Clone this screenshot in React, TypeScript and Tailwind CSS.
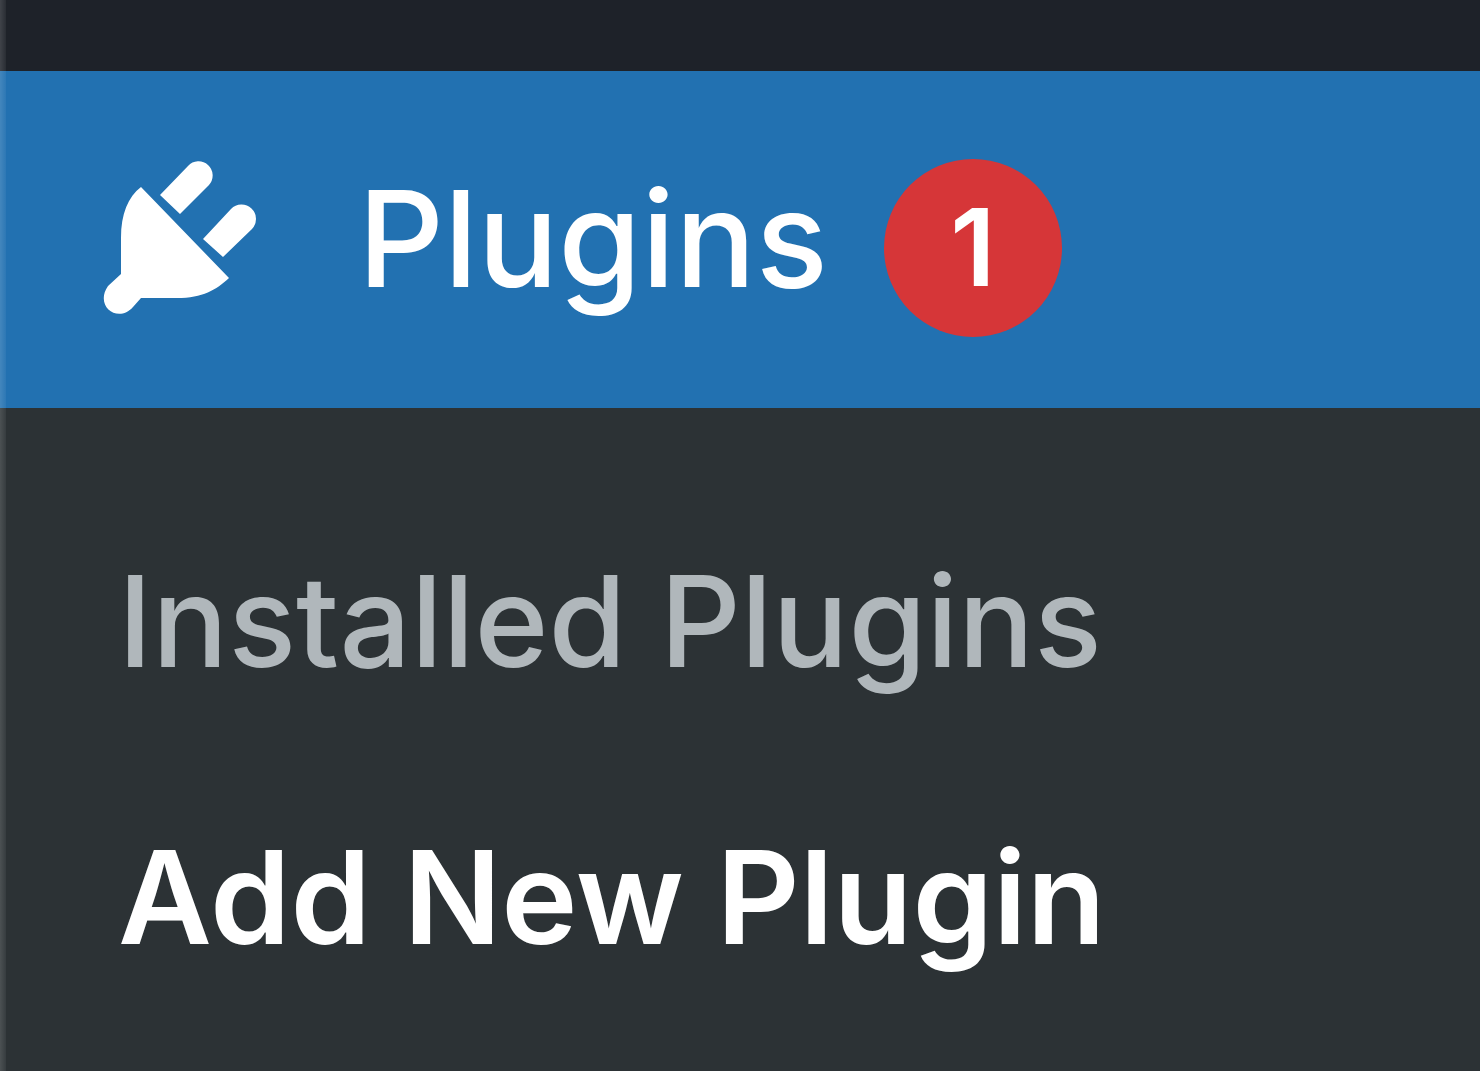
const SUBMENU_ITEMS = [
  { label: 'Installed Plugins', href: '#installed', current: false },
  { label: 'Add New Plugin', href: '#add-new', current: true },
];

const PlugIcon = () => (
  <svg
    viewBox="0 0 160 160"
    className="size-40 shrink-0"
    fill="currentColor"
    aria-hidden="true"
  >
    <path d="M60 35 88 6A14 14 0 0 1 109 25L80 54Z" />
    <path d="M103 79 131 49A14 14 0 0 1 152 69L123 97Z" />
    <path d="M41 27 129 118C116 130 103 138 77 138H41L33 147C18 164-6 146 8 126L21 114V78C21 54 28 37 41 27Z" />
  </svg>
);

const UpdateBadge = ({ count }: { count: number }) => (
  <span className="mt-4 ml-14 flex size-[178px] shrink-0 items-center justify-center rounded-full bg-[#d63638] text-[107px] leading-none font-semibold">
    {count}
  </span>
);

export default function App() {
  return (
    <nav
      aria-label="Admin menu"
      className="relative min-h-screen bg-[#2c3235] font-['Inter',sans-serif]"
    >
      <div className="h-[71px] bg-[#1e2229]" />
      <a
        href="#plugins"
        className="flex h-[337px] items-center bg-[#2271b1] pl-[100px] text-white"
      >
        <PlugIcon />
        <span className="mb-1 ml-[98px] text-[134px] leading-none font-medium">
          Plugins
        </span>
        <UpdateBadge count={1} />
      </a>
      <ul className="px-[118px] pt-[75px]">
        {SUBMENU_ITEMS.map(({ label, href, current }) => (
          <li key={label}>
            <a
              href={href}
              className={
                current
                  ? 'block text-[129px] leading-[276px] font-semibold whitespace-nowrap text-white'
                  : 'block text-[126px] leading-[276px] font-medium whitespace-nowrap text-[#b0b7bb]'
              }
            >
              {label}
            </a>
          </li>
        ))}
      </ul>
      {/* light edge along the left side of the menu */}
      <div className="pointer-events-none absolute inset-y-0 left-0 w-1.5 bg-linear-to-r from-white/15 to-white/5" />
    </nav>
  );
}
